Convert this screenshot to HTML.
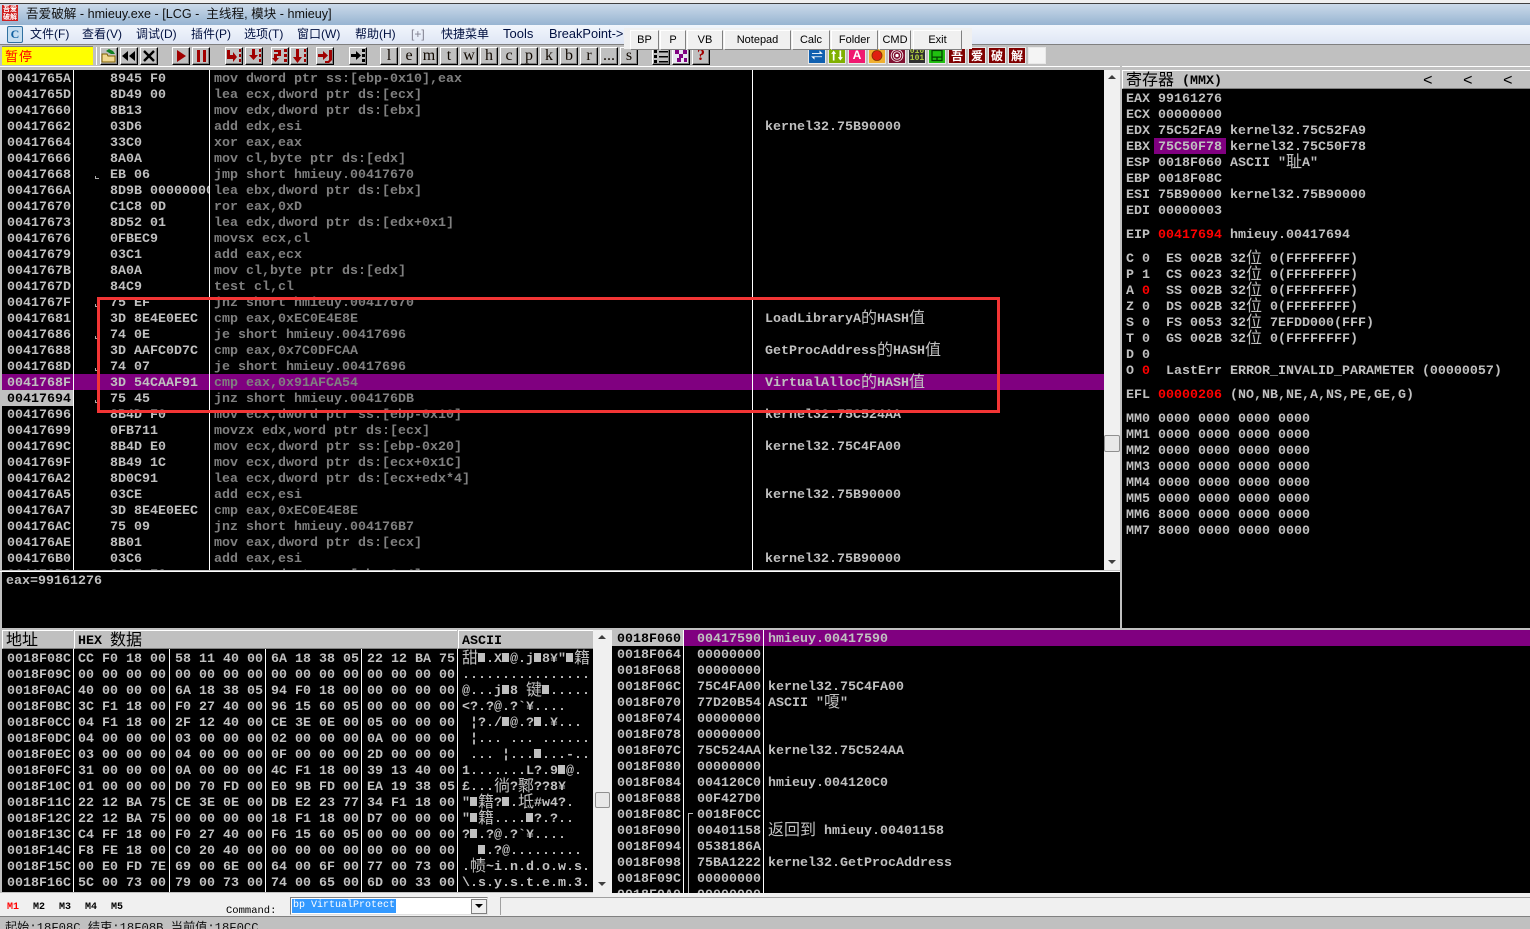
<!DOCTYPE html>
<html><head><meta charset="utf-8"><style>
html,body{margin:0;padding:0;width:1530px;height:929px;overflow:hidden;background:#c0c0c0}
div,pre,svg{position:absolute}
pre{margin:0;padding-top:2px;font:bold 13.33px/16px "Liberation Mono","Noto Sans CJK SC",monospace;color:#c0c0c0;white-space:pre}
.c{font:normal 16px/0 "WenQuanYi Zen Hei","Noto Sans CJK SC",sans-serif;position:relative;top:1px}
.q{display:inline-block;width:7px;height:9px;background:#c0c0c0;margin-right:1px}
.g{color:#808080}
.k{background:#000;overflow:hidden}
.l{background:#fff;width:1px}
.b{top:47px;width:16px;height:16px;background:#c0c0c0;border:1px solid;border-color:#fff #000 #000 #fff;box-shadow:inset -1px -1px 0 #808080;font:16px/16px "Liberation Serif",serif;text-align:center;color:#100800}
.m{top:25px;height:18px;font:12px/18px "Liberation Sans","Noto Sans CJK SC",sans-serif;color:#001040;white-space:pre}
.t{top:30px;height:18px;background:#f0f0f0;border:1px solid;border-color:#fff #808080 #808080 #fff;font:11px/19px "Liberation Sans",sans-serif;text-align:center;color:#000;box-sizing:content-box}
.i{top:48px;width:16px;height:15px;overflow:hidden;outline:1px solid #e8e8e8}
.h{background:#c0c0c0;border-top:1px solid #fff;border-left:1px solid #fff;border-bottom:1px solid #808080;box-sizing:border-box}
.w{background:#800000;color:#fff;font:bold 12px/15px "Noto Sans CJK SC",sans-serif;text-align:center}
.tk{width:3px;height:2px;border-bottom:1px solid #aaa;border-left:1px solid #aaa;left:93px}
.s{font:bold 10px/12px "Liberation Mono",monospace;top:902px;color:#000}
</style></head><body>
<div style="left:0;top:0;width:1530px;height:3px;background:#f0f0f0"></div>
<div style="left:0;top:3px;width:1530px;height:1px;background:#404040"></div>
<div style="left:0;top:4px;width:1530px;height:21px;background:linear-gradient(#cbdaea,#97b4d1)"></div>
<div style="left:2px;top:5px;width:16px;height:16px;background:#d02020;color:#fff;font:bold 7px/8px 'Noto Sans CJK SC',sans-serif;text-align:center">吾爱<br>破解</div>
<div style="left:26px;top:4px;height:20px;font:12.6px/20px 'Liberation Sans','Noto Sans CJK SC',sans-serif;color:#101010;white-space:pre">吾爱破解 - hmieuy.exe - [LCG -  主线程, 模块 - hmieuy]</div>
<div style="left:0;top:25px;width:1530px;height:19px;background:linear-gradient(#f2f6fc,#dfe6f5)"></div>
<div style="left:7px;top:26px;width:14px;height:15px;background:#c6def0;border:1px solid #3070a0;border-radius:2px;font:bold 12px/15px 'Liberation Serif',serif;color:#1060a0;text-align:center">C</div>
<div class="m" style="left:30px">文件(F)</div>
<div class="m" style="left:82px">查看(V)</div>
<div class="m" style="left:136px">调试(D)</div>
<div class="m" style="left:191px">插件(P)</div>
<div class="m" style="left:244px">选项(T)</div>
<div class="m" style="left:297px">窗口(W)</div>
<div class="m" style="left:355px">帮助(H)</div>
<div class="m" style="left:411px;color:#808090">[+]</div>
<div class="m" style="left:441px">快捷菜单</div>
<div class="m" style="left:503px;font-size:13px">Tools</div>
<div class="m" style="left:549px;font-size:12.800px">BreakPoint-&gt;</div>
<div style="left:0;top:44px;width:1530px;height:1px;background:#808080"></div>
<div style="left:0;top:45px;width:1530px;height:21px;background:#c0c0c0"></div>
<div style="left:2px;top:46px;width:91px;height:19px;background:#ff0;border-top:1px solid #808080;box-sizing:border-box;font:13px/18px 'Noto Sans CJK SC',sans-serif;color:#f00;padding-left:3px;letter-spacing:1px">暂停</div>
<div style="left:96px;top:47px;width:1px;height:18px;background:#fff"></div>

<div class="b" style="left:100px"><svg style="left:0;top:0" width="16" height="16"><path d="M1 6h5l1 2h7v6H1z" fill="#f0d890" stroke="#806000"/><path d="M5 3l3-2 4 2 2 3-4 0z" fill="#108020"/></svg></div>
<div class="b" style="left:120px"><svg style="left:0;top:0" width="16" height="16"><path d="M7 3v10L1 8zM14 3v10L8 8z" fill="#000"/></svg></div>
<div class="b" style="left:140px"><svg style="left:0;top:0" width="16" height="16"><path d="M3 3l10 10M13 3L3 13" stroke="#000" stroke-width="2.400"/></svg></div>
<div class="b" style="left:172px"><svg style="left:0;top:0" width="16" height="16"><path d="M4 2v12l9-6z" fill="#a00000"/></svg></div>
<div class="b" style="left:192px"><svg style="left:0;top:0" width="16" height="16"><path d="M4 2h3v12H4zM10 2h3v12h-3z" fill="#a00000"/></svg></div>
<div class="b" style="left:225px"><svg style="left:0;top:0" width="16" height="16"><path d="M1 2h3v5h3V4l4 5-4 5v-3H1z" fill="#a00000"/><path d="M13 1h2v3h-2zM13 6h2v3h-2zM13 11h2v3h-2z" fill="#a00000"/></svg></div>
<div class="b" style="left:245px"><svg style="left:0;top:0" width="16" height="16"><path d="M6 1h3v6h3l-4.500 5L3 7h3z" fill="#a00000"/><path d="M13 1h2v3h-2zM13 6h2v3h-2zM13 11h2v3h-2z" fill="#a00000"/></svg></div>
<div class="b" style="left:271px"><svg style="left:0;top:0" width="16" height="16"><path d="M2 2h7v6H5v2h2l-3.500 4L0 10h2V6h4V4H2z" fill="#a00000"/><path d="M12 1h3v3h-3zM12 6h3v3h-3zM12 11h3v3h-3z" fill="#a00000"/></svg></div>
<div class="b" style="left:290px"><svg style="left:0;top:0" width="16" height="16"><path d="M5 1h3v8h3l-4.500 6L2 9h3z" fill="#a00000"/><path d="M13 1h2v3h-2zM13 6h2v3h-2zM13 11h2v3h-2z" fill="#a00000"/></svg></div>
<div class="b" style="left:316px"><svg style="left:0;top:0" width="16" height="16"><path d="M1 6h5V3l5 4.500L6 12V9H1z" fill="#a00000"/><path d="M12 2h3v10l-3 3H8v-2h3l1-1z" fill="#a00000"/></svg></div>
<div class="b" style="left:349px"><svg style="left:0;top:0" width="16" height="16"><path d="M1 6h5V3l5 4.500L6 12V9H1z" fill="#000"/><path d="M12 1h3v3h-3zM12 6h3v3h-3zM12 11h3v3h-3z" fill="#000"/></svg></div>

<div class="b" style="left:380px">l</div><div class="b" style="left:400px">e</div><div class="b" style="left:420px">m</div><div class="b" style="left:440px">t</div><div class="b" style="left:460px">w</div><div class="b" style="left:480px">h</div><div class="b" style="left:500px">c</div><div class="b" style="left:520px">p</div><div class="b" style="left:540px">k</div><div class="b" style="left:560px">b</div><div class="b" style="left:580px">r</div><div class="b" style="left:600px">...</div><div class="b" style="left:620px">s</div>
<div class="b" style="left:652px;border-color:#c0c0c0 #000 #000 #fff"><svg style="left:0;top:0" width="16" height="16"><path d="M1 2h3v3H1zM1 7h3v3H1zM1 12h3v3H1zM6 3h9v1.500H6zM6 8h9v1.500H6zM6 13h9v1.500H6z" fill="#000"/></svg></div>
<div class="b" style="left:672px;background:#e8e8f0"><svg style="left:0;top:0" width="16" height="16"><path d="M2 2h4v4H2zM10 2h4v4h-4zM6 6h4v4H6zM4 10h4v4H4zM11 10h3v4h-3z" fill="#800080"/></svg></div>
<div class="b" style="left:692px;color:#a00000;font-weight:bold">?</div>

<div class="i" style="left:809px;background:#1060b0"><svg style="left:0;top:0" width="16" height="15" viewBox="0 0 18 18"><path d="M3 6h9V3l4 4H3zM15 11H6v3l-4-4h13z" fill="#fff"/></svg></div>
<div class="i" style="left:829px;background:#80b000"><svg style="left:0;top:0" width="16" height="15" viewBox="0 0 18 18"><path d="M5 3l3 4H6v8H4V7H2zM13 15l3-4h-2V3h-2v8h-2z" fill="#fff"/></svg></div>
<div class="i" style="left:849px;background:#f01870;color:#fff;font:bold 12px/15px 'Liberation Sans',sans-serif;text-align:center">A</div>
<div class="i" style="left:869px;background:#f0b030"><svg style="left:0;top:0" width="16" height="15" viewBox="0 0 18 18"><circle cx="9" cy="9" r="6" fill="#e02010" stroke="#803000"/></svg></div>
<div class="i" style="left:889px;background:#801030"><svg style="left:0;top:0" width="16" height="15" viewBox="0 0 18 18"><circle cx="9" cy="9" r="7" fill="none" stroke="#fff"/><circle cx="9" cy="9" r="4.500" fill="none" stroke="#fff"/><circle cx="9" cy="9" r="2" fill="#fff"/></svg></div>
<div class="i" style="left:909px;background:#303030;color:#b0d040;font:bold 8px/7px 'Liberation Mono',monospace;text-align:center">010<br>101</div>
<div class="i" style="left:929px;background:#20c010"><svg style="left:0;top:0" width="16" height="15" viewBox="0 0 18 18"><path d="M3 3h12v12H3zM3 11h12M9 11v4" fill="none" stroke="#004000" stroke-width="1.500"/></svg></div>
<div class="i w" style="left:949px">吾</div><div class="i w" style="left:969px">爱</div><div class="i w" style="left:989px">破</div><div class="i w" style="left:1009px">解</div>
<div class="i" style="left:1029px;background:#f4f4f4"></div>

<div style="left:624px;top:28px;width:348px;height:21px;background:#f0f0f0"></div>
<div class="t" style="left:630px;width:27px">BP</div>
<div class="t" style="left:660px;width:24px">P</div>
<div class="t" style="left:687px;width:34px">VB</div>
<div class="t" style="left:724px;width:65px">Notepad</div>
<div class="t" style="left:792px;width:36px">Calc</div>
<div class="t" style="left:831px;width:45px">Folder</div>
<div class="t" style="left:879px;width:30px">CMD</div>
<div class="t" style="left:913px;width:47px">Exit</div>

<div style="left:0;top:66px;width:1530px;height:1px;background:#fff"></div>

<!-- disassembly -->
<div class="k" style="left:2px;top:70px;width:1102px;height:500px">
<div style="left:0;top:304px;width:1102px;height:16px;background:#800080"></div>
<div style="left:0;top:320px;width:71px;height:16px;background:#c0c0c0"></div>
<pre style="left:5px;top:0">0041765A
0041765D
00417660
00417662
00417664
00417666
00417668
0041766A
00417670
00417673
00417676
00417679
0041767B
0041767D
0041767F
00417681
00417686
00417688
0041768D
0041768F
<span style="color:#000">00417694</span>
00417696
00417699
0041769C
0041769F
004176A2
004176A5
004176A7
004176AC
004176AE
004176B0
004176B2</pre>
<pre style="left:108px;top:0;width:99px;overflow:hidden">8945 F0
8D49 00
8B13
03D6
33C0
8A0A
EB 06
8D9B 00000000
C1C8 0D
8D52 01
0FBEC9
03C1
8A0A
84C9
75 EF
3D 8E4E0EEC
74 0E
3D AAFC0D7C
74 07
3D 54CAAF91
75 45
8B4D F0
0FB711
8B4D E0
8B49 1C
8D0C91
03CE
3D 8E4E0EEC
75 09
8B01
03C6
8945 FC</pre>
<pre class="g" style="left:212px;top:0">mov dword ptr ss:[ebp-0x10],eax
lea ecx,dword ptr ds:[ecx]
mov edx,dword ptr ds:[ebx]
add edx,esi
xor eax,eax
mov cl,byte ptr ds:[edx]
jmp short hmieuy.00417670
lea ebx,dword ptr ds:[ebx]
ror eax,0xD
lea edx,dword ptr ds:[edx+0x1]
movsx ecx,cl
add eax,ecx
mov cl,byte ptr ds:[edx]
test cl,cl
jnz short hmieuy.00417670
cmp eax,0xEC0E4E8E
je short hmieuy.00417696
cmp eax,0x7C0DFCAA
je short hmieuy.00417696
cmp eax,0x91AFCA54
jnz short hmieuy.004176DB
mov ecx,dword ptr ss:[ebp-0x10]
movzx edx,word ptr ds:[ecx]
mov ecx,dword ptr ss:[ebp-0x20]
mov ecx,dword ptr ds:[ecx+0x1C]
lea ecx,dword ptr ds:[ecx+edx*4]
add ecx,esi
cmp eax,0xEC0E4E8E
jnz short hmieuy.004176B7
mov eax,dword ptr ds:[ecx]
add eax,esi
mov dword ptr ss:[ebp-0x4],eax</pre>
<pre style="left:763px;top:48px">kernel32.75B90000











LoadLibraryA<span class="c">的</span>HASH<span class="c">值</span>

GetProcAddress<span class="c">的</span>HASH<span class="c">值</span>

VirtualAlloc<span class="c">的</span>HASH<span class="c">值</span>

kernel32.75C524AA

kernel32.75C4FA00


kernel32.75B90000



kernel32.75B90000</pre>
<div class="tk" style="left:93px;top:106px"></div>
<div class="tk" style="left:93px;top:234px"></div>
<div class="tk" style="left:93px;top:266px"></div>
<div class="tk" style="left:93px;top:298px"></div>
<div class="tk" style="left:93px;top:330px"></div>
<div class="l" style="left:71px;top:0;height:500px"></div>
<div class="l" style="left:207px;top:0;height:500px"></div>
<div class="l" style="left:750px;top:0;height:500px"></div>
</div>
<div style="left:1104px;top:70px;width:16px;height:500px;background:#f0f0f0"></div>
<svg style="left:1108px;top:75px" width="8" height="5"><path d="M4 0l4 4H0z" fill="#404040"/></svg>
<svg style="left:1108px;top:560px" width="8" height="5"><path d="M4 4l4-4H0z" fill="#404040"/></svg>
<div style="left:1104px;top:435px;width:14px;height:15px;background:#e8e8e8;border:1px solid #909090;border-radius:2px"></div>

<!-- info -->
<div style="left:0;top:571px;width:1122px;height:1px;background:#fff"></div>
<div class="k" style="left:2px;top:572px;width:1118px;height:56px"><pre style="left:4px;top:0">eax=99161276</pre></div>

<!-- registers -->
<div style="left:1120px;top:66px;width:2px;height:564px;background:#c0c0c0"></div>
<div class="k" style="left:1122px;top:70px;width:408px;height:558px"></div>
<div class="h" style="left:1122px;top:70px;width:408px;height:19px"></div>
<pre style="left:1126px;top:72px;color:#000"><span class="c">寄存器</span> (MMX)</pre>
<pre style="left:1423px;top:71px;color:#000;font-weight:normal;font-size:16px">&lt;</pre><pre style="left:1463px;top:71px;color:#000;font-weight:normal;font-size:16px">&lt;</pre><pre style="left:1503px;top:71px;color:#000;font-weight:normal;font-size:16px">&lt;</pre>
<div style="left:1154px;top:138px;width:72px;height:16px;background:#800080"></div>
<pre style="left:1126px;top:90px">EAX 99161276
ECX 00000000
EDX 75C52FA9 kernel32.75C52FA9
EBX 75C50F78 kernel32.75C50F78
ESP 0018F060 ASCII "<span class="c">耻</span>A"
EBP 0018F08C
ESI 75B90000 kernel32.75B90000
EDI 00000003</pre>
<pre style="left:1126px;top:226px">EIP <span style="color:#f00">00417694</span> hmieuy.00417694</pre>
<pre style="left:1126px;top:250px">C 0  ES 002B 32<span class="c">位</span> 0(FFFFFFFF)
P 1  CS 0023 32<span class="c">位</span> 0(FFFFFFFF)
A <span style="color:#f00">0</span>  SS 002B 32<span class="c">位</span> 0(FFFFFFFF)
Z 0  DS 002B 32<span class="c">位</span> 0(FFFFFFFF)
S 0  FS 0053 32<span class="c">位</span> 7EFDD000(FFF)
T 0  GS 002B 32<span class="c">位</span> 0(FFFFFFFF)
D 0
O <span style="color:#f00">0</span>  LastErr ERROR_INVALID_PARAMETER (00000057)</pre>
<pre style="left:1126px;top:386px">EFL <span style="color:#f00">00000206</span> (NO,NB,NE,A,NS,PE,GE,G)</pre>
<pre style="left:1126px;top:410px">MM0 0000 0000 0000 0000
MM1 0000 0000 0000 0000
MM2 0000 0000 0000 0000
MM3 0000 0000 0000 0000
MM4 0000 0000 0000 0000
MM5 0000 0000 0000 0000
MM6 8000 0000 0000 0000
MM7 8000 0000 0000 0000</pre>

<!-- dump -->
<div class="h" style="left:2px;top:630px;width:71px;height:19px"></div>
<div class="h" style="left:74px;top:630px;width:383px;height:19px"></div>
<div class="h" style="left:458px;top:630px;width:135px;height:19px"></div>
<pre style="left:6px;top:632px;color:#000"><span class="c">地址</span></pre>
<pre style="left:78px;top:632px;color:#000">HEX <span class="c">数据</span></pre>
<pre style="left:462px;top:632px;color:#000">ASCII</pre>
<div class="k" style="left:2px;top:649px;width:591px;height:243px">
<pre style="left:5px;top:1px">0018F08C
0018F09C
0018F0AC
0018F0BC
0018F0CC
0018F0DC
0018F0EC
0018F0FC
0018F10C
0018F11C
0018F12C
0018F13C
0018F14C
0018F15C
0018F16C</pre>
<pre style="left:76px;top:1px">CC F0 18 00
00 00 00 00
40 00 00 00
3C F1 18 00
04 F1 18 00
04 00 00 00
03 00 00 00
31 00 00 00
01 00 00 00
22 12 BA 75
22 12 BA 75
C4 FF 18 00
F8 FE 18 00
00 E0 FD 7E
5C 00 73 00</pre>
<pre style="left:173px;top:1px">58 11 40 00
00 00 00 00
6A 18 38 05
F0 27 40 00
2F 12 40 00
03 00 00 00
04 00 00 00
0A 00 00 00
D0 70 FD 00
CE 3E 0E 00
00 00 00 00
F0 27 40 00
C0 20 40 00
69 00 6E 00
79 00 73 00</pre>
<pre style="left:269px;top:1px">6A 18 38 05
00 00 00 00
94 F0 18 00
96 15 60 05
CE 3E 0E 00
02 00 00 00
0F 00 00 00
4C F1 18 00
E0 9B FD 00
DB E2 23 77
18 F1 18 00
F6 15 60 05
00 00 00 00
64 00 6F 00
74 00 65 00</pre>
<pre style="left:365px;top:1px">22 12 BA 75
00 00 00 00
00 00 00 00
00 00 00 00
05 00 00 00
0A 00 00 00
2D 00 00 00
39 13 40 00
EA 19 38 05
34 F1 18 00
D7 00 00 00
00 00 00 00
00 00 00 00
77 00 73 00
6D 00 33 00</pre>
<pre style="left:460px;top:1px"><span class="c">甜</span><i class="q"></i>.X<i class="q"></i>@.j<i class="q"></i>8¥"<i class="q"></i><span class="c">籍</span>
................
@...j<i class="q"></i>8 <span class="c">键</span><i class="q"></i>.....
&lt;?.?@.?`¥....
 ¦?./<i class="q"></i>@.?<i class="q"></i>.¥...
 ¦... ... .......
 ... ¦...<i class="q"></i>...-...
1.......L?.9<i class="q"></i>@.
£...<span class="c">徜</span>?<span class="c">鄹</span>??8¥
"<i class="q"></i><span class="c">籍</span>?<i class="q"></i>.<span class="c">坻</span>#w4?.
"<i class="q"></i><span class="c">籍</span>....<i class="q"></i>?.?..
?<i class="q"></i>.?@.?`¥....
  <i class="q"></i>.?@.........
.<span class="c">帻</span>~i.n.d.o.w.s.
\.s.y.s.t.e.m.3.</pre>
<div class="l" style="left:71px;top:0;height:243px"></div>
<div class="l" style="left:167px;top:0;height:243px"></div>
<div class="l" style="left:263px;top:0;height:243px"></div>
<div class="l" style="left:359px;top:0;height:243px"></div>
<div class="l" style="left:455px;top:0;height:243px"></div>
</div>
<div style="left:593px;top:630px;width:19px;height:263px;background:#f0f0f0"></div>
<svg style="left:598px;top:635px" width="8" height="5"><path d="M4 0l4 4H0z" fill="#404040"/></svg>
<svg style="left:598px;top:882px" width="8" height="5"><path d="M4 4l4-4H0z" fill="#404040"/></svg>
<div style="left:595px;top:792px;width:13px;height:14px;background:#e8e8e8;border:1px solid #909090;border-radius:2px"></div>

<!-- stack -->
<div class="k" style="left:612px;top:630px;width:918px;height:263px">
<div style="left:0;top:0;width:71px;height:16px;background:#c0c0c0"></div>
<div style="left:72px;top:0;width:846px;height:16px;background:#800080"></div>
<pre style="left:5px;top:0"><span style="color:#000">0018F060</span>
0018F064
0018F068
0018F06C
0018F070
0018F074
0018F078
0018F07C
0018F080
0018F084
0018F088
0018F08C
0018F090
0018F094
0018F098
0018F09C
0018F0A0</pre>
<pre style="left:85px;top:0">00417590
00000000
00000000
75C4FA00
77D20B54
00000000
00000000
75C524AA
00000000
004120C0
00F427D0
0018F0CC
00401158
0538186A
75BA1222
00000000
00000000</pre>
<pre style="left:156px;top:0">hmieuy.00417590


kernel32.75C4FA00
ASCII "<span class="c">嗄</span>"


kernel32.75C524AA

hmieuy.004120C0


<span class="c">返回到</span> hmieuy.00401158

kernel32.GetProcAddress</pre>
<div style="left:76px;top:183px;width:5px;height:80px;border-left:1px solid #c0c0c0;border-top:1px solid #c0c0c0;box-sizing:border-box"></div>
<div class="l" style="left:71px;top:0;height:263px"></div>
<div class="l" style="left:151px;top:0;height:263px"></div>
</div>

<!-- red box -->
<div style="left:97px;top:297px;width:903px;height:116px;border:3px solid #f33535;box-sizing:border-box"></div>

<!-- bottom -->
<div style="left:0;top:893px;width:1530px;height:23px;background:#f0f0f0"></div>
<div class="s" style="left:7px;color:#f00">M1</div>
<div class="s" style="left:33px">M2</div>
<div class="s" style="left:59px">M3</div>
<div class="s" style="left:85px">M4</div>
<div class="s" style="left:111px">M5</div>
<div class="s" style="left:226px;top:905px;font-weight:normal;font-size:10.500px">Command:</div>
<div style="left:290px;top:897px;width:198px;height:18px;background:#fff;border:1px solid;border-color:#808080 #e0e0e0 #e0e0e0 #808080;box-sizing:border-box"></div>
<div style="left:292px;top:899px;width:104px;height:14px;background:#3399ff"></div>
<pre style="left:293px;top:897px;color:#fff;font-size:10px;font-weight:normal;line-height:14px">bp VirtualProtect</pre>
<div style="left:471px;top:899px;width:16px;height:15px;background:#f0f0f0;border:1px solid #808080;box-sizing:border-box"></div>
<svg style="left:475px;top:904px" width="8" height="5"><path d="M0 0h8L4 4z" fill="#000"/></svg>
<div style="left:500px;top:897px;width:1030px;height:18px;border-left:1px solid #a0a0a0;border-top:1px solid #a0a0a0;box-sizing:border-box"></div>
<div style="left:0;top:916px;width:1530px;height:1px;background:#808080"></div>
<div style="left:0;top:917px;width:1530px;height:12px;background:#c0c0c0;overflow:hidden">
<pre style="left:5px;top:1px;color:#101010;font-weight:normal;font-size:12.200px;line-height:16px">起始:18F08C 结束:18F08B 当前值:18F0CC</pre></div>
</body></html>
